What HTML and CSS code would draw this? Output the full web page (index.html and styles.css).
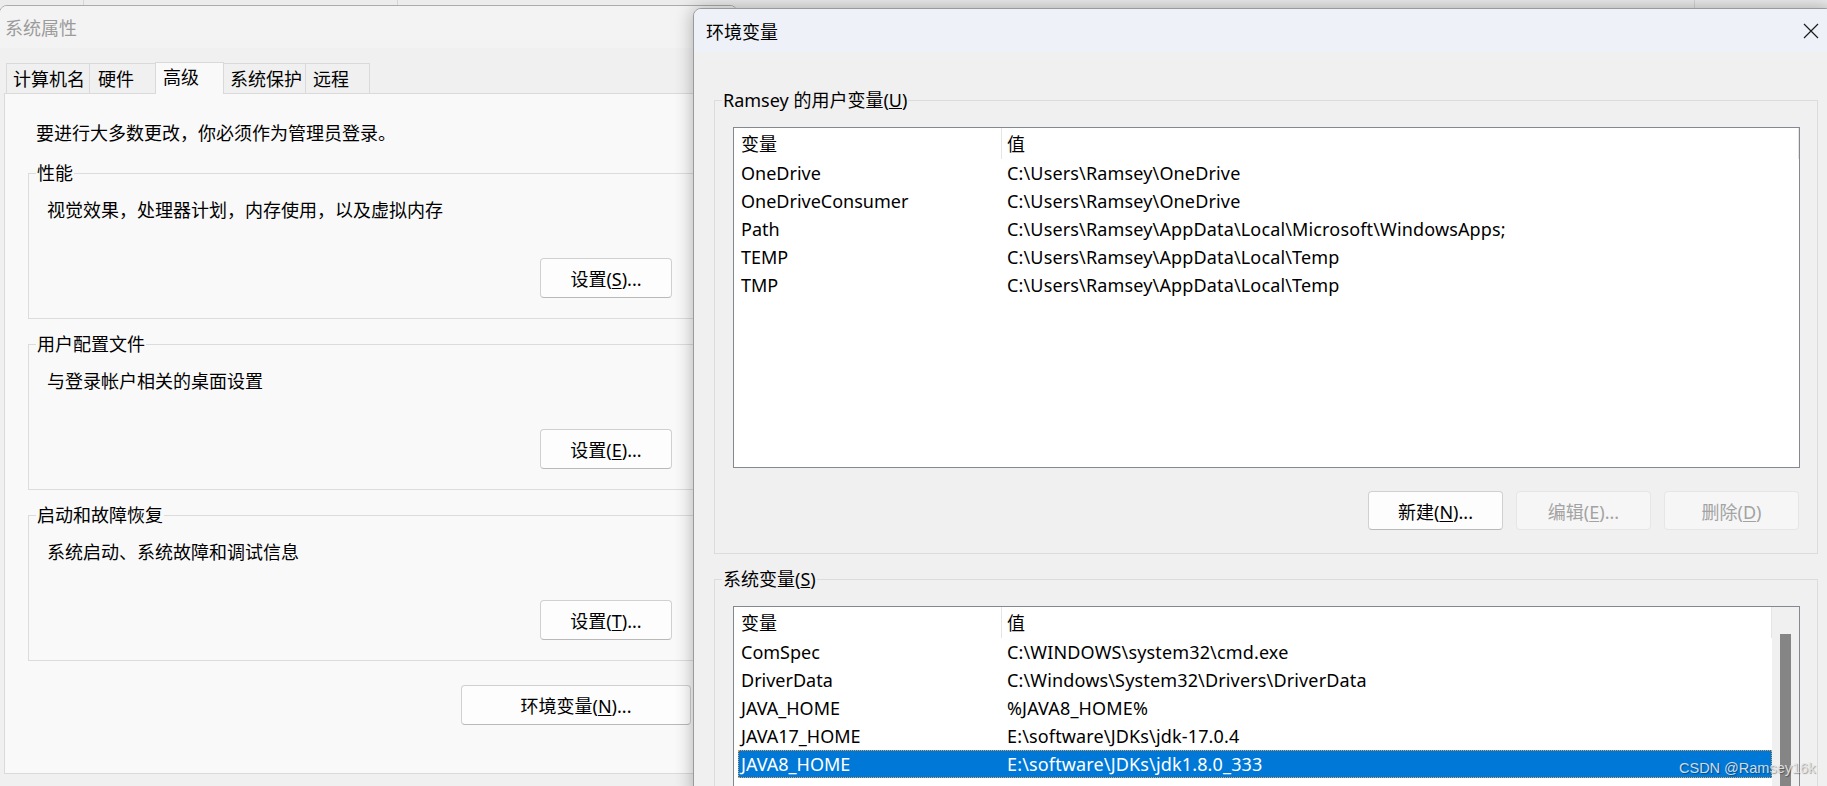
FILE: index.html
```html
<!DOCTYPE html>
<html lang="zh-CN">
<head>
<meta charset="utf-8">
<title>环境变量</title>
<link rel="stylesheet" href="styles.css">
</head>
<body>
<div class="desktop">
  <div class="behind">
    <span class="behind-sep sep-a"></span>
    <span class="behind-sep sep-b"></span>
    <span class="behind-sep sep-c"></span>
  </div>

  <section class="win win-sys">
    <header class="titlebar sys-titlebar"><span class="title inactive">系统属性</span></header>
    <nav class="tabs">
      <span class="tab tab-name">计算机名</span>
      <span class="tab tab-hw">硬件</span>
      <span class="tab tab-adv active">高级</span>
      <span class="tab tab-prot">系统保护</span>
      <span class="tab tab-remote">远程</span>
    </nav>
    <div class="panel">
      <p class="note">要进行大多数更改，你必须作为管理员登录。</p>

      <fieldset class="group sgroup">
        <legend>性能</legend>
        <p class="desc">视觉效果，处理器计划，内存使用，以及虚拟内存</p>
        <div class="btn-row"><button class="btn btn-set">设置(<u>S</u>)...</button></div>
      </fieldset>

      <fieldset class="group sgroup">
        <legend>用户配置文件</legend>
        <p class="desc">与登录帐户相关的桌面设置</p>
        <div class="btn-row"><button class="btn btn-set">设置(<u>E</u>)...</button></div>
      </fieldset>

      <fieldset class="group sgroup">
        <legend>启动和故障恢复</legend>
        <p class="desc">系统启动、系统故障和调试信息</p>
        <div class="btn-row"><button class="btn btn-set">设置(<u>T</u>)...</button></div>
      </fieldset>

      <div class="env-row"><button class="btn btn-env">环境变量(<u>N</u>)...</button></div>
    </div>
  </section>

  <section class="win win-env">
    <header class="titlebar env-titlebar">
      <span class="title">环境变量</span>
      <span class="close">
        <svg width="16" height="16" viewBox="0 0 16 16"><path d="M1 1 L15 15 M15 1 L1 15" stroke="#1b1b1b" stroke-width="1.2" fill="none"/></svg>
      </span>
    </header>
    <div class="env-body">
      <fieldset class="group egroup">
        <legend>Ramsey 的用户变量(<u>U</u>)</legend>
        <div class="list user-list">
          <div class="list-main">
            <div class="lrow lhead"><span class="c1">变量</span><span class="c2">值</span></div>
            <div class="lrow"><span class="c1">OneDrive</span><span class="c2">C:\Users\Ramsey\OneDrive</span></div>
            <div class="lrow"><span class="c1">OneDriveConsumer</span><span class="c2">C:\Users\Ramsey\OneDrive</span></div>
            <div class="lrow"><span class="c1">Path</span><span class="c2">C:\Users\Ramsey\AppData\Local\Microsoft\WindowsApps;</span></div>
            <div class="lrow"><span class="c1">TEMP</span><span class="c2">C:\Users\Ramsey\AppData\Local\Temp</span></div>
            <div class="lrow"><span class="c1">TMP</span><span class="c2">C:\Users\Ramsey\AppData\Local\Temp</span></div>
          </div>
        </div>
        <div class="btns">
          <button class="btn btn-act">新建(<u>N</u>)...</button>
          <button class="btn btn-act" disabled>编辑(<u>E</u>)...</button>
          <button class="btn btn-act" disabled>删除(<u>D</u>)</button>
        </div>
      </fieldset>

      <fieldset class="group egroup sysgroup">
        <legend>系统变量(<u>S</u>)</legend>
        <div class="list sys-list">
          <div class="list-main">
            <div class="lrow lhead"><span class="c1">变量</span><span class="c2">值</span></div>
            <div class="lrow"><span class="c1">ComSpec</span><span class="c2">C:\WINDOWS\system32\cmd.exe</span></div>
            <div class="lrow"><span class="c1">DriverData</span><span class="c2">C:\Windows\System32\Drivers\DriverData</span></div>
            <div class="lrow"><span class="c1">JAVA_HOME</span><span class="c2">%JAVA8_HOME%</span></div>
            <div class="lrow"><span class="c1">JAVA17_HOME</span><span class="c2">E:\software\JDKs\jdk-17.0.4</span></div>
            <div class="lrow sel"><span class="c1">JAVA8_HOME</span><span class="c2">E:\software\JDKs\jdk1.8.0_333</span></div>
            <div class="lrow"><span class="c1">NUMBER_OF_PROCESSORS</span><span class="c2">8</span></div>
          </div>
          <div class="vscroll"><div class="thumb"></div></div>
        </div>
      </fieldset>
    </div>
  </section>

  <div class="watermark">CSDN @Ramsey16k</div>
</div>
</body>
</html>
```

FILE: styles.css
```css
html, body {
  margin: 0;
  padding: 0;
}

body {
  width: 1827px;
  height: 786px;
  overflow: hidden;
  background: #e9e9e9;
  font-family: "Noto Sans", "Noto Sans CJK SC", sans-serif;
  font-size: 18px;
  color: #000;
}

.desktop {
  position: relative;
  width: 1827px;
  height: 786px;
  overflow: hidden;
}

/* window peeking from behind at the very top */
.behind {
  height: 10px;
  background: #ececec;
}

.behind-sep {
  position: absolute;
  top: 0;
  width: 1px;
  height: 8px;
  background: #d6d6d6;
}

.sep-a { left: 83px; }
.sep-b { left: 397px; }
.sep-c { left: 1694px; }

/* ---------- generic window ---------- */
.win {
  position: absolute;
  box-sizing: border-box;
  background: #f0f0f0;
  border-radius: 8px 8px 0 0;
  overflow: hidden;
}

.titlebar {
  display: flex;
  align-items: center;
  box-sizing: border-box;
}

.title {
  font-family: "Noto Sans CJK SC", "Noto Sans", sans-serif;
  font-size: 18px;
  white-space: nowrap;
}

.title.inactive {
  color: #9b9b9b;
}

/* ---------- 系统属性 ---------- */
.win-sys {
  left: -1px;
  top: 5px;
  width: 739px;
  height: 800px;
  border: 1px solid #ababab;
}

.sys-titlebar {
  height: 42px;
  padding-left: 5px;
  background: #f3f3f3;
}

.tabs {
  display: flex;
  align-items: flex-end;
  height: 31px;
  margin-top: 14px;
  padding-left: 6px;
}

.tab {
  box-sizing: border-box;
  height: 30px;
  line-height: 28px;
  padding-left: 6px;
  border: 1px solid #d9d9d9;
  border-bottom: none;
  background: #f0f0f0;
  white-space: nowrap;
  font-family: "Noto Sans CJK SC", sans-serif;
}

.tab + .tab { margin-left: -1px; }

.tab-name { width: 84px; }
.tab-hw { width: 67px; padding-left: 8px; }
.tab-adv { width: 69px; padding-left: 7px; }
.tab-prot { width: 83px; }
.tab-remote { width: 65px; padding-left: 7px; }

.tab.active {
  position: relative;
  z-index: 1;
  height: 32px;
  margin-bottom: -1px;
  line-height: 26px;
  background: #f9f9f9;
}

.panel {
  box-sizing: border-box;
  width: 723px;
  height: 681px;
  margin-left: 4px;
  border: 1px solid #dadada;
  background: #f9f9f9;
  padding-top: 27px;
}

.note {
  margin: 0 0 16px 31px;
  line-height: 24px;
  white-space: nowrap;
}

.group {
  box-sizing: border-box;
  min-width: 0;
  margin: 0;
  padding: 0;
  border: 1px solid #dcdcdc;
}

.group legend {
  margin-left: 7px;
  padding: 0 1px;
  line-height: 24px;
  white-space: nowrap;
}

.sgroup {
  width: 675px;
  margin: 0 0 13px 23px;
  padding-bottom: 20px;
}

.desc {
  margin: 13px 0 0 18px;
  line-height: 24px;
  white-space: nowrap;
}

.btn-row {
  display: flex;
  justify-content: flex-end;
  margin-top: 36px;
  padding-right: 30px;
}

.btn {
  box-sizing: border-box;
  margin: 0;
  padding: 0;
  font-family: "Noto Sans", "Noto Sans CJK SC", sans-serif;
  font-size: 18px;
  color: #000;
  background: #fdfdfd;
  border: 1px solid #d0d0d0;
  border-bottom-color: #b9b9b9;
  border-radius: 4px;
  white-space: nowrap;
}

.btn u {
  text-underline-offset: 2px;
}

.btn-set {
  width: 132px;
  height: 40px;
}

.env-row {
  display: flex;
  justify-content: flex-end;
  margin-top: 24px;
  padding-right: 35px;
}

.btn-env {
  width: 230px;
  height: 40px;
}

/* ---------- 环境变量 ---------- */
.win-env {
  left: 693px;
  top: 8px;
  width: 1140px;
  height: 790px;
  border: 1px solid #9a9a9a;
  box-shadow: 0 0 18px rgba(0, 0, 0, 0.3);
}

.env-titlebar {
  height: 43px;
  padding-left: 12px;
  background: #eef2f8;
}

.close {
  display: flex;
  align-items: center;
  justify-content: center;
  width: 42px;
  height: 43px;
  margin-left: auto;
}

.egroup {
  width: 1104px;
  margin: 36px 0 0 20px;
  padding-bottom: 23px;
}

.sysgroup {
  margin-top: 13px;
}

.list {
  display: flex;
  box-sizing: border-box;
  border: 1px solid #848890;
  background: #fff;
  margin: 15px 17px 0 18px;
  overflow: hidden;
}

.user-list {
  height: 341px;
}

.sys-list {
  height: 260px;
}

.list-main {
  flex: 1;
  min-width: 0;
}

.lrow {
  display: grid;
  grid-template-columns: 268px 1fr;
  height: 28px;
  line-height: 28px;
  white-space: nowrap;
}

.lrow .c1 {
  padding-left: 7px;
  overflow: hidden;
}

.lrow .c2 {
  padding-left: 5px;
  overflow: hidden;
  letter-spacing: 0.15px;
}

.lhead {
  height: 31px;
  line-height: 31px;
}

.lhead .c1,
.lhead .c2 {
  box-sizing: border-box;
  border-right: 1px solid #e5e5e5;
  font-family: "Noto Sans CJK SC", sans-serif;
}

.lrow.sel {
  grid-template-columns: 264px 1fr;
  margin-left: 4px;
  background: #0078d7;
  color: #fff;
  outline: 1px dotted #f0a040;
  outline-offset: -1px;
}

.lrow.sel .c1 {
  padding-left: 3px;
}

.vscroll {
  width: 27px;
  flex: none;
  background: #f0f0f0;
}

.thumb {
  width: 11px;
  height: 240px;
  margin: 27px 0 0 8px;
  background: #858585;
}

.btns {
  display: flex;
  justify-content: flex-end;
  gap: 13px;
  margin: 23px 18px 0 0;
}

.btn-act {
  width: 135px;
  height: 39px;
}

.btn-act:disabled {
  color: #a3a3a3;
  background: #f6f6f6;
  border-color: #e6e6e6;
}

.watermark {
  position: absolute;
  left: 1679px;
  top: 759px;
  font-family: "Liberation Sans", sans-serif;
  font-size: 14.5px;
  line-height: 18px;
  color: rgba(230, 230, 230, 0.92);
  text-shadow: 1px 1px 1px rgba(0, 0, 0, 0.35);
  white-space: nowrap;
}
```
